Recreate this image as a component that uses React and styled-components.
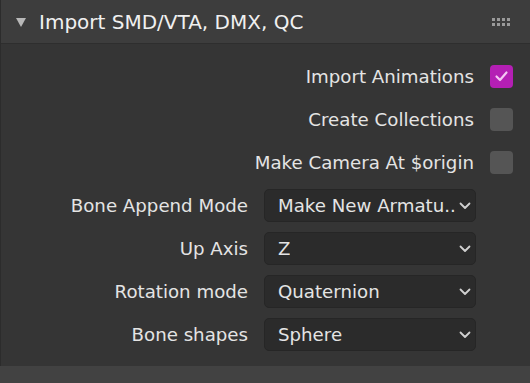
import React from "react"
import styled, { createGlobalStyle } from "styled-components"

const GlobalStyle = createGlobalStyle`
  html, body {
    margin: 0;
    padding: 0;
    background: #424242;
  }
  body {
    font-family: "DejaVu Sans", "Liberation Sans", sans-serif;
    color: #e6e6e6;
  }
`

const checks = [
  { label: "Import Animations", on: true },
  { label: "Create Collections", on: false },
  { label: "Make Camera At $origin", on: false },
]

const selects = [
  { label: "Bone Append Mode", value: "Make New Armatu.." },
  { label: "Up Axis", value: "Z" },
  { label: "Rotation mode", value: "Quaternion" },
  { label: "Bone shapes", value: "Sphere" },
]

const App = () => {
  return (
    <>
      <GlobalStyle />
      <Panel>
        <Header>
          <Triangle />
          <Title>Import SMD/VTA, DMX, QC</Title>
          <Grip>
            {Array.from({ length: 8 }).map((_, i) => (
              <Dot key={i} />
            ))}
          </Grip>
        </Header>
        <Body>
          {checks.map((c) => (
            <CheckRow key={c.label}>
              <CheckLabel>{c.label}</CheckLabel>
              <Checkbox $on={c.on}>
                {c.on && (
                  <svg width="17" height="17" viewBox="0 0 17 17">
                    <path
                      d="M3.5 8.5 L7 12 L13.5 4.5"
                      fill="none"
                      stroke="#f4c6f4"
                      strokeWidth="2.2"
                      strokeLinecap="round"
                      strokeLinejoin="round"
                    />
                  </svg>
                )}
              </Checkbox>
            </CheckRow>
          ))}
          {selects.map((s) => (
            <SelectRow key={s.label}>
              <SelectLabel>{s.label}</SelectLabel>
              <Select>
                <span>{s.value}</span>
                <svg width="12" height="8" viewBox="0 0 12 8">
                  <path
                    d="M1.5 1.5 L6 6 L10.5 1.5"
                    fill="none"
                    stroke="#d0d0d0"
                    strokeWidth="1.8"
                    strokeLinecap="round"
                    strokeLinejoin="round"
                  />
                </svg>
              </Select>
            </SelectRow>
          ))}
        </Body>
      </Panel>
    </>
  )
}

const Panel = styled.div`
  width: 530px;
  background: #353535;
  border-left: 1px solid #2c2c2c;
  box-sizing: border-box;
`

const Header = styled.div`
  height: 44px;
  display: flex;
  align-items: center;
  background: #3d3d3d;
  border-bottom: 1px solid #2e2e2e;
  box-sizing: border-box;
  padding: 0 20px 0 15px;
`

const Triangle = styled.div`
  width: 0;
  height: 0;
  border-left: 5px solid transparent;
  border-right: 5px solid transparent;
  border-top: 9px solid #b8b8b8;
  margin-right: 13px;
  margin-top: 1px;
`

const Title = styled.div`
  font-size: 20px;
  color: #f0f0f0;
  flex: 1;
`

const Grip = styled.div`
  display: grid;
  grid-template-columns: repeat(4, 3px);
  gap: 2px;
`

const Dot = styled.div`
  width: 3px;
  height: 3px;
  background: #9a9a9a;
`

const Body = styled.div`
  padding: 11px 17px 10px 0;
  display: flex;
  flex-direction: column;
`

const CheckRow = styled.div`
  height: 43px;
  display: flex;
  align-items: center;
  justify-content: flex-end;
`

const CheckLabel = styled.div`
  font-size: 18.2px;
  color: #e4e4e4;
  margin-right: 16px;
`

const Checkbox = styled.div`
  width: 23px;
  height: 23px;
  border-radius: 4px;
  background: ${(p) => (p.$on ? "#b41fb4" : "#555555")};
  display: flex;
  align-items: center;
  justify-content: center;
`

const SelectRow = styled.div`
  height: 43px;
  display: grid;
  grid-template-columns: 1fr 212px;
  column-gap: 16px;
  align-items: center;
  padding-right: 37px;
`

const SelectLabel = styled.div`
  font-size: 18.2px;
  color: #e4e4e4;
  text-align: right;
`

const Select = styled.div`
  height: 33px;
  box-sizing: border-box;
  border: 1px solid #262626;
  border-radius: 5px;
  background: #2b2b2b;
  display: flex;
  align-items: center;
  justify-content: space-between;
  padding: 0 4px 0 13px;
  font-size: 18.2px;
  color: #e4e4e4;
  span {
    white-space: nowrap;
    overflow: hidden;
  }
  svg {
    flex-shrink: 0;
  }
`

export default App
